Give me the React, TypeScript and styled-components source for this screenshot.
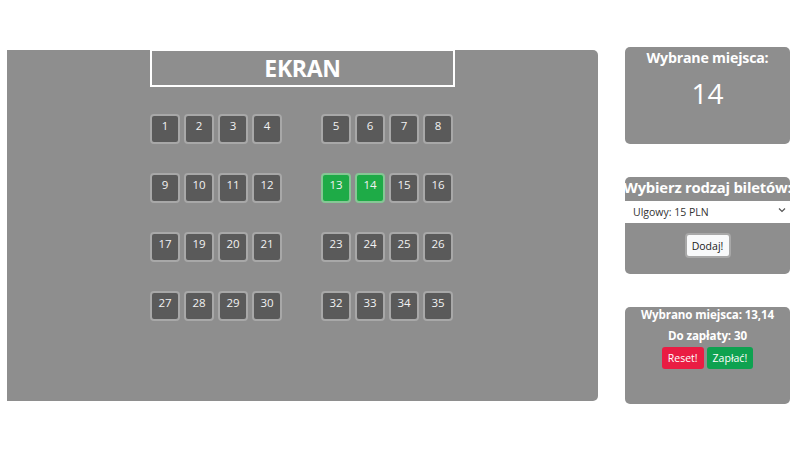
import React, { useState } from 'react';
import styled, { createGlobalStyle } from 'styled-components';

const GlobalStyle = createGlobalStyle`
  html, body {
    margin: 0;
    padding: 0;
    background: #fff;
    font-family: "Open Sans", "Noto Sans", "Liberation Sans", sans-serif;
  }
`;

const Page = styled.div`
  width: 800px;
  height: 450px;
  display: flex;
  align-items: flex-start;
  padding: 47px 0 0 7px;
  box-sizing: border-box;
`;

const Hall = styled.div`
  width: 591px;
  height: 351px;
  margin-top: 3px;
  background-color: #8e8e8e;
  border-radius: 0 5px 5px 0;
  display: flex;
  flex-direction: column;
  align-items: center;
`;

const Screen = styled.div`
  width: 305px;
  height: 37px;
  box-sizing: border-box;
  border: 2px solid #fff;
  border-top-width: 1px;
  color: #fff;
  font-size: 23px;
  font-weight: 700;
  letter-spacing: -0.3px;
  display: flex;
  align-items: center;
  justify-content: center;
`;

const Rows = styled.div`
  margin-top: 27px;
  display: flex;
  flex-direction: column;
  gap: 29px;
  width: 305px;
`;

const Row = styled.div`
  display: flex;
  gap: 39px;
`;

const Block = styled.div`
  display: flex;
  gap: 4px;
`;

const Seat = styled.button<{ $picked?: boolean }>`
  width: 30px;
  height: 30px;
  box-sizing: border-box;
  padding: 2px 0 0;
  border: 2px solid ${p => (p.$picked ? '#86c795' : '#a8a8a8')};
  border-radius: 4px;
  background-color: ${p => (p.$picked ? '#1eab47' : '#5a5a5a')};
  color: #f2f2f2;
  font-family: "Open Sans", "Noto Sans", sans-serif;
  font-size: 11.5px;
  line-height: 16px;
  display: flex;
  justify-content: center;
  align-items: flex-start;
  cursor: pointer;
`;

const Side = styled.div`
  margin-left: 27px;
  width: 165px;
  display: flex;
  flex-direction: column;
  gap: 33px;
`;

const Card = styled.div`
  height: 97px;
  box-sizing: border-box;
  background-color: #8e8e8e;
  border-radius: 5px;
  color: #fff;
  display: flex;
  flex-direction: column;
  align-items: center;
`;

const CardTitle = styled.div<{ $size: number }>`
  font-size: ${p => p.$size}px;
  font-weight: 700;
  letter-spacing: -0.2px;
  white-space: nowrap;
  line-height: 21px;
`;

const BigNumber = styled.div`
  margin-top: 8px;
  font-size: 28px;
  font-weight: 400;
  line-height: 34px;
`;

const SelectWrap = styled.div`
  position: relative;
  width: 100%;
  margin-top: 1px;
`;

const Select = styled.select`
  width: 100%;
  height: 22px;
  box-sizing: border-box;
  appearance: none;
  border: none;
  border-radius: 0;
  background: #fff;
  color: #333;
  font-family: "Open Sans", "Noto Sans", sans-serif;
  font-size: 10.5px;
  padding: 0 0 0 8px;
  outline: none;
`;

const Chevron = styled.svg`
  position: absolute;
  right: 4px;
  top: 8px;
  pointer-events: none;
`;

const AddButton = styled.button`
  margin-top: 10px;
  width: 46px;
  height: 25px;
  box-sizing: border-box;
  background: #f8f9fa;
  border: 2px solid #a8a8a8;
  border-radius: 4px;
  color: #222;
  font-family: "Open Sans", "Noto Sans", sans-serif;
  font-size: 10.5px;
  padding: 0;
  cursor: pointer;
`;

const Summary = styled.div<{ $gap?: number }>`
  margin-top: ${p => p.$gap ?? 0}px;
  font-size: 11.6px;
  font-weight: 700;
  letter-spacing: -0.1px;
  line-height: 15px;
`;

const Actions = styled.div`
  margin-top: 4px;
  display: flex;
  gap: 3px;
`;

const ActionButton = styled.button<{ $tone: 'danger' | 'success' }>`
  height: 22px;
  padding: 0 6px;
  border: none;
  border-radius: 3px;
  background-color: ${p => (p.$tone === 'danger' ? '#ea1c43' : '#0ea250')};
  color: #fff;
  font-family: "Open Sans", "Noto Sans", sans-serif;
  font-size: 10.5px;
  cursor: pointer;
`;

const rows: number[][][] = [
  [[1, 2, 3, 4], [5, 6, 7, 8]],
  [[9, 10, 11, 12], [13, 14, 15, 16]],
  [[17, 19, 20, 21], [23, 24, 25, 26]],
  [[27, 28, 29, 30], [32, 33, 34, 35]],
];

export default function App() {
  const [picked, setPicked] = useState<number[]>([13, 14]);

  const toggle = (n: number) =>
    setPicked(prev => (prev.includes(n) ? prev.filter(x => x !== n) : [...prev, n].sort((a, b) => a - b)));

  return (
    <>
      <GlobalStyle />
      <Page>
        <Hall>
          <Screen>EKRAN</Screen>
          <Rows>
            {rows.map((row, i) => (
              <Row key={i}>
                {row.map((block, j) => (
                  <Block key={j}>
                    {block.map(n => (
                      <Seat key={n} $picked={picked.includes(n)} onClick={() => toggle(n)}>
                        {n}
                      </Seat>
                    ))}
                  </Block>
                ))}
              </Row>
            ))}
          </Rows>
        </Hall>
        <Side>
          <Card>
            <CardTitle $size={14.2}>Wybrane miejsca:</CardTitle>
            <BigNumber>14</BigNumber>
          </Card>
          <Card>
            <CardTitle $size={14.8}>Wybierz rodzaj biletów:</CardTitle>
            <SelectWrap>
              <Select defaultValue="ulgowy">
                <option value="ulgowy">Ulgowy: 15 PLN</option>
                <option value="normalny">Normalny: 20 PLN</option>
              </Select>
              <Chevron width="8" height="6" viewBox="0 0 8 6">
                <path d="M1 1.5 L4 4.5 L7 1.5" fill="none" stroke="#555" strokeWidth="1.2" />
              </Chevron>
            </SelectWrap>
            <AddButton>Dodaj!</AddButton>
          </Card>
          <Card>
            <Summary>Wybrano miejsca: {picked.join(',')}</Summary>
            <Summary $gap={6}>Do zapłaty: {picked.length * 15}</Summary>
            <Actions>
              <ActionButton $tone="danger">Reset!</ActionButton>
              <ActionButton $tone="success">Zapłać!</ActionButton>
            </Actions>
          </Card>
        </Side>
      </Page>
    </>
  );
}
